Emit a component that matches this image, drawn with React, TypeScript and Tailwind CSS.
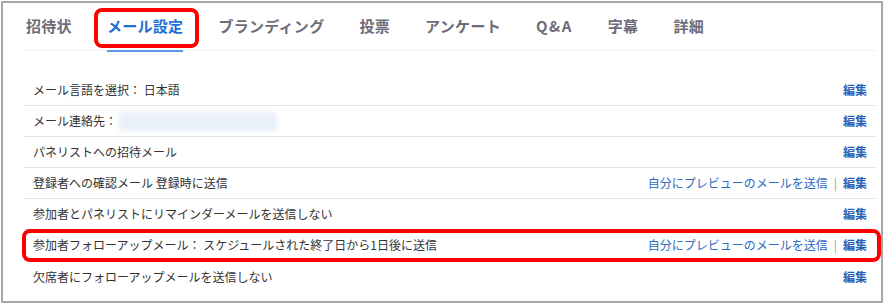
const tabs = ["招待状", "メール設定", "ブランディング", "投票", "アンケート", "Q&A", "字幕", "詳細"];

const rows = [
  { label: "メール言語を選択： 日本語" },
  { label: "メール連絡先：", blur: true },
  { label: "パネリストへの招待メール" },
  { label: "登録者への確認メール 登録時に送信", preview: true },
  { label: "参加者とパネリストにリマインダーメールを送信しない" },
  { label: "参加者フォローアップメール： スケジュールされた終了日から1日後に送信", preview: true, marked: true },
  { label: "欠席者にフォローアップメールを送信しない", last: true },
];

export default function App() {
  return (
    <div
      className="w-[886px] h-[305px] overflow-hidden bg-white pl-[1px] pt-[1px]"
      style={{ fontFamily: '"Noto Sans CJK JP", "Noto Sans", sans-serif' }}
    >
      <div className="w-[882px] h-[302px] border-2 border-[#a8a8a8] pl-[21px] pr-[5px]">
        <div className="flex h-[48px] items-center gap-[35px] border-b border-[#f0f0f0] pl-[2px]">
          {tabs.map((tab) => {
            const active = tab === "メール設定";
            return (
              <div key={tab} className="relative flex h-full items-center">
                <span
                  className={
                    active
                      ? "text-[15px] font-bold tracking-[0.3px] text-[#2170d8]"
                      : tab === "Q&A"
                        ? "text-[15px] font-bold tracking-[1.5px] text-[#6d6d7a]"
                        : "text-[15px] font-bold tracking-[0.3px] text-[#6d6d7a]"
                  }
                >
                  {tab}
                </span>
                {active && (
                  <>
                    <span className="absolute bottom-[-2px] left-0 right-0 h-[2px] bg-[#5b9be6]" />
                    <span className="absolute top-[5px] bottom-[2px] left-[-13px] right-[-16px] rounded-[8px] border-[4px] border-[#ff0000]" />
                  </>
                )}
              </div>
            );
          })}
        </div>

        <div className="mt-[24px]">
          {rows.map((row) => (
            <div
              key={row.label}
              className={
                row.last
                  ? "relative flex h-[31px] items-center justify-between px-[9px] text-[12px] text-[#333333]"
                  : "relative flex h-[31px] items-center justify-between border-b border-[#e2e2e2] px-[9px] text-[12px] text-[#333333]"
              }
            >
              <div className="flex items-center">
                <span>{row.label}</span>
                {row.blur && (
                  <span className="ml-[2px] inline-block h-[19px] w-[158px] rounded-[3px] bg-[#e9f0f9] blur-[2px]" />
                )}
              </div>
              <div className="flex items-center text-[12px]">
                {row.preview && (
                  <>
                    <span className="text-[#2b6cc4]">自分にプレビューのメールを送信</span>
                    <span className="mx-[6px] text-[#999999]">|</span>
                  </>
                )}
                <span className="font-bold text-[#2563b8]">編集</span>
              </div>
              {row.marked && (
                <span className="absolute top-[-1px] bottom-[-2px] left-[-2px] right-[-5px] rounded-[8px] border-[4px] border-[#ff0000]" />
              )}
            </div>
          ))}
        </div>
      </div>
    </div>
  );
}
